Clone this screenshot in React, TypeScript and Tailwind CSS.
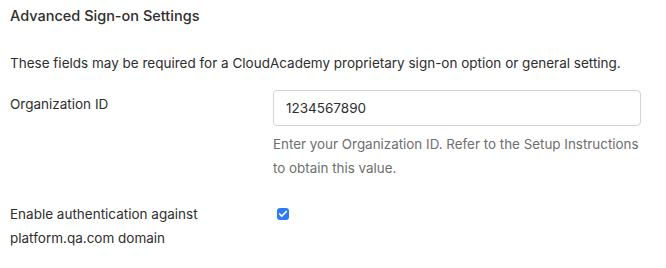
import { Check } from 'lucide-react'

const App = () => {
    return (
        <div className="h-[268px] w-[666px] bg-white pl-[10px] pt-[5px] font-['Inter','Noto_Sans',sans-serif] text-[#2e2e2e]">
            <h2 className="text-[14.5px] font-medium leading-[22px]">
                Advanced Sign-on Settings
            </h2>
            <p className="mt-[26px] text-[13.5px] leading-[20px]">
                These fields may be required for a CloudAcademy proprietary
                sign-on option or general setting.
            </p>
            <div className="mt-[17px] grid grid-cols-[263px_368px]">
                <label className="pt-[2px] text-[13.5px] leading-[24px]">
                    Organization ID
                </label>
                <div>
                    <input
                        type="text"
                        defaultValue="1234567890"
                        className="h-[36px] w-full rounded-[4px] border border-[#d4d4d4] px-[12px] text-[13.5px] text-[#2e2e2e] outline-none"
                    />
                    <p className="mt-[6px] whitespace-nowrap text-[13.4px] leading-[24px] text-[#6e6e6e]">
                        Enter your Organization ID. Refer to the Setup Instructions
                        <br />
                        to obtain this value.
                    </p>
                </div>
                <label className="mt-[22px] text-[13.5px] leading-[24px]">
                    Enable authentication against
                    <br />
                    platform.qa.com domain
                </label>
                <div className="mt-[22px] pl-[4px] pt-[6px]">
                    <span className="flex h-[12px] w-[12px] items-center justify-center rounded-[3px] bg-[#2f7bf5]">
                        <Check className="h-[10px] w-[10px] text-white" strokeWidth={4} />
                    </span>
                </div>
            </div>
        </div>
    )
}

export default App
